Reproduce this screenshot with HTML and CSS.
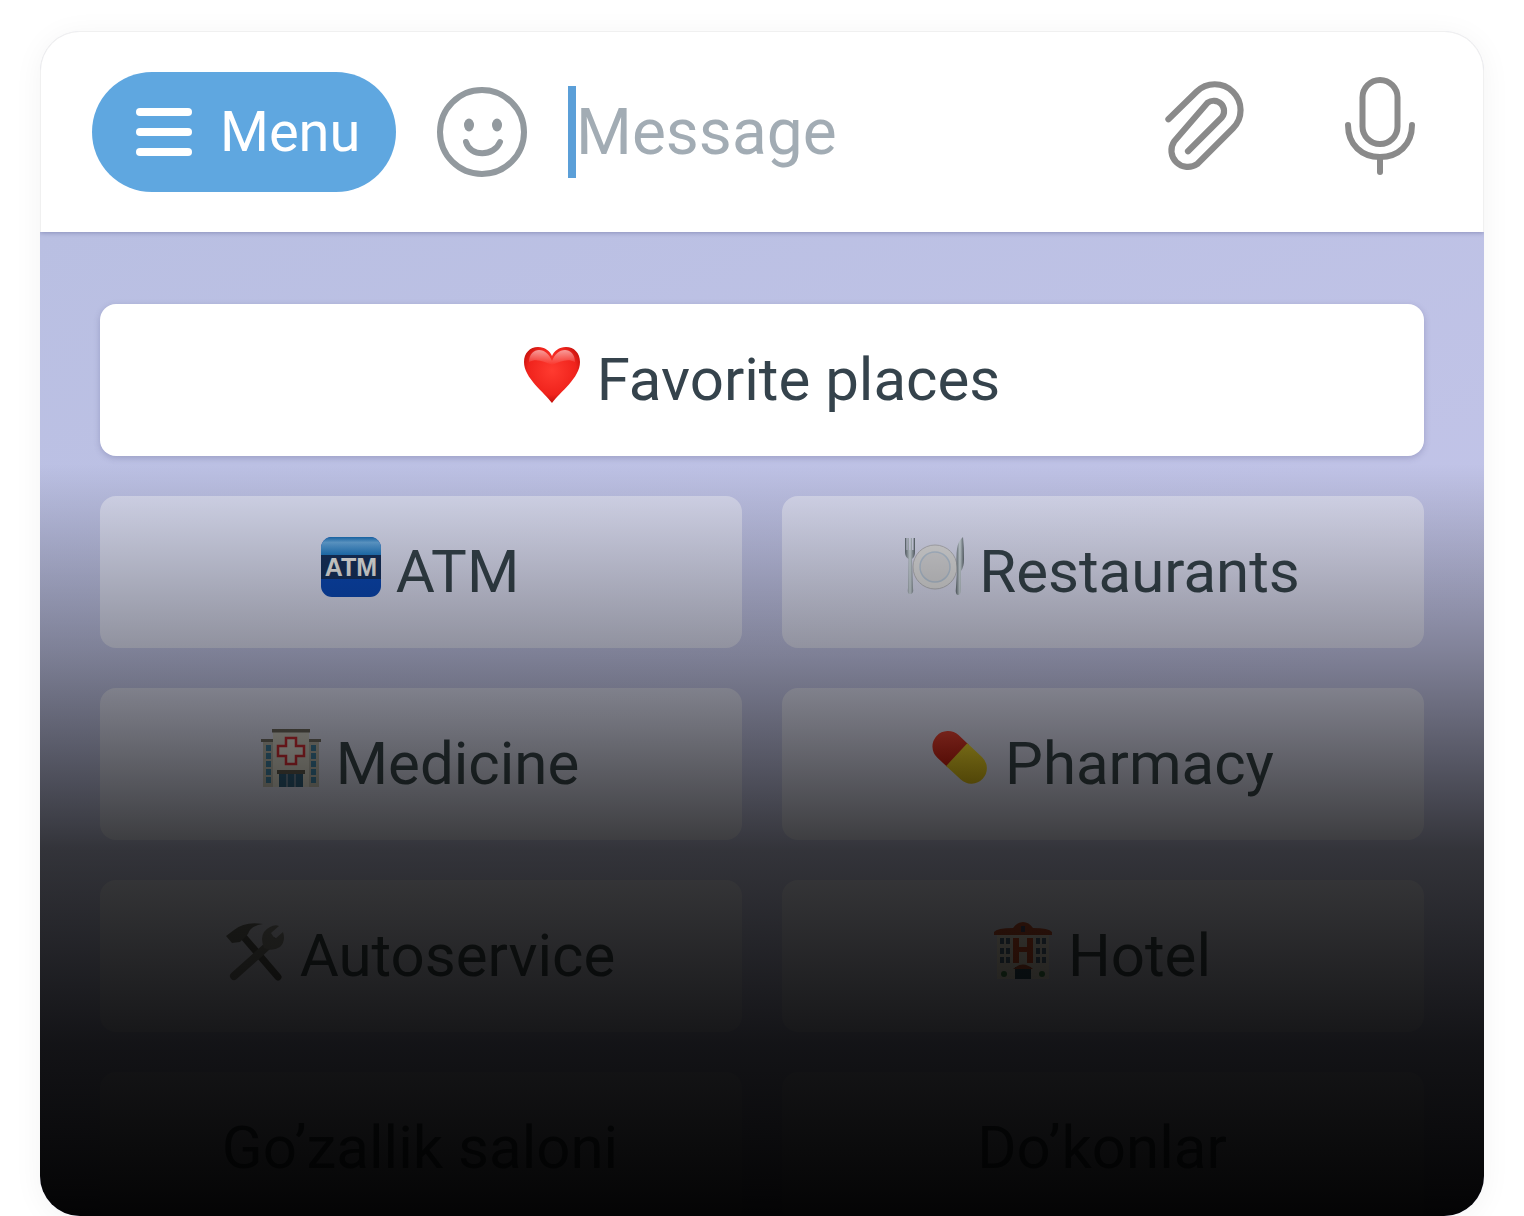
FILE: index.html
```html
<!DOCTYPE html>
<html lang="en">
<head>
<meta charset="utf-8">
<title>Keyboard</title>
<link rel="stylesheet" href="styles.css">
</head>
<body>
<main class="card">
  <header class="bar">
    <button class="menu">
      <span class="burger"><i></i><i></i><i></i></span>
      <span>Menu</span>
    </button>
    <svg class="smile" viewBox="0 0 90 90" fill="none" stroke="#92999e" stroke-width="6" stroke-linecap="round">
      <circle cx="45" cy="45" r="42"/>
      <ellipse cx="32" cy="38" rx="5" ry="6.5" fill="#92999e" stroke="none"/>
      <ellipse cx="60" cy="38" rx="5" ry="6.5" fill="#92999e" stroke="none"/>
      <path d="M29 55 C33 70 57 70 63 55"/>
    </svg>
    <div class="input"><span class="caret"></span><span class="placeholder">Message</span></div>
    <svg class="clip" viewBox="0 0 90 100" fill="none" stroke="#8a8a8a" stroke-width="6" stroke-linecap="round" stroke-linejoin="round">
      <path d="M9 44 L36.3 17.3 A25 25 0 0 1 71.7 52.7 L37 87.4 A16 16 0 0 1 14.7 65.2 L47 28 A10 10 0 0 1 61 42 L28 75"/>
    </svg>
    <svg class="mic" viewBox="0 0 76 104" fill="none" stroke="#8a8a8a" stroke-width="6" stroke-linecap="round">
      <rect x="20.5" y="3" width="35" height="64" rx="17.5"/>
      <path d="M6 48 C6 68 20 80 38 80 C56 80 70 68 70 48"/>
      <path d="M38 80 V95"/>
    </svg>
  </header>
  <section class="keys">
    <button class="key key-wide">
      <svg class="emoji" viewBox="0 0 60 60">
        <defs>
          <radialGradient id="hg" cx="50%" cy="42%" r="60%"><stop offset="0" stop-color="#ff3b30"/><stop offset=".72" stop-color="#f0231c"/><stop offset="1" stop-color="#b80d08"/></radialGradient>
          <linearGradient id="hh" x1="0" y1="0" x2="0" y2="1"><stop offset="0" stop-color="#fff" stop-opacity=".55"/><stop offset="1" stop-color="#fff" stop-opacity="0"/></linearGradient>
        </defs>
        <path fill="url(#hg)" d="M30 58 C22 47 2 33 2 17 C2 8 8 2 16 2 C23 2 28 6 30 11 C32 6 37 2 44 2 C52 2 58 8 58 17 C58 33 38 47 30 58Z"/>
        <path fill="url(#hh)" d="M7 17 C7 9 12 5 17 5 C23 5 27 9 30 16 C33 9 37 5 43 5 C48 5 53 9 53 17 C45 13 38 17 30 20 C22 17 15 13 7 17Z"/>
      </svg>
      <span>Favorite places</span>
    </button>
    <button class="key">
      <svg class="emoji" viewBox="0 0 60 60">
        <defs>
          <linearGradient id="at" x1="0" y1="0" x2="0" y2="1"><stop offset="0" stop-color="#1a70b8"/><stop offset=".3" stop-color="#66a8de"/><stop offset="1" stop-color="#2079c2"/></linearGradient>
        </defs>
        <rect width="60" height="60" rx="11" fill="#0a47b4"/>
        <path d="M0 18 V11 A11 11 0 0 1 11 0 H49 A11 11 0 0 1 60 11 V18Z" fill="url(#at)"/>
        <rect y="18" width="60" height="24" fill="#15305c"/>
        <text class="atm" x="30" y="39" text-anchor="middle">ATM</text>
      </svg>
      <span>ATM</span>
    </button>
    <button class="key">
      <svg class="emoji" viewBox="0 0 60 60">
        <defs>
          <linearGradient id="st" x1="0" y1="0" x2="1" y2="0"><stop offset="0" stop-color="#5f6a72"/><stop offset=".5" stop-color="#d2dde4"/><stop offset="1" stop-color="#5c666e"/></linearGradient>
        </defs>
        <path d="M1 1 V15 Q1 20 4.500 22 L4 51 Q3 57 6 57 Q10 57 9 51 L8 22 Q11 20 11 15 V1 H9.500 V13 H8 V1 H6.500 V13 H5 V1 H3.500 V13 H2.500 V1Z" fill="url(#st)"/>
        <circle cx="31" cy="30" r="22" fill="#dcdcde" stroke="#b4b4ba"/>
        <circle cx="31" cy="30" r="15" fill="#d4d4d8" stroke="#b5c4d6" stroke-width="1.500"/>
        <path d="M54 58 Q51 58 52 50 L53 34 Q52 20 53 12 Q54 4 59 0 Q60 10 60 22 Q60 30 57 34 L57 52 Q57 58 54 58Z" fill="url(#st)"/>
      </svg>
      <span>Restaurants</span>
    </button>
    <button class="key">
      <svg class="emoji" viewBox="0 0 60 60">
        <rect x="2" y="12" width="12" height="46" fill="#b8b6ae"/>
        <rect x="46" y="12" width="12" height="46" fill="#b8b6ae"/>
        <rect x="0" y="10" width="15" height="3" fill="#6f6c66"/>
        <rect x="45" y="10" width="15" height="3" fill="#6f6c66"/>
        <rect x="12" y="3" width="36" height="55" fill="#d4d2ca"/>
        <rect x="11" y="0" width="38" height="3.500" fill="#6a665f"/>
        <path d="M25 9 H35 V17 H43 V27 H35 V35 H25 V27 H17 V17 H25Z" fill="#e6e4de" stroke="#d22a36" stroke-width="2.500"/>
        <rect x="16" y="41" width="28" height="4" fill="#5c5850"/>
        <rect x="18" y="45" width="24" height="13" fill="#2a5a7c"/>
        <path d="M26 45 V58 M34 45 V58" stroke="#aab" stroke-width="1"/>
        <g fill="#3c7ea4"><rect x="5" y="16" width="5" height="6"/><rect x="5" y="24" width="5" height="6"/><rect x="5" y="32" width="5" height="6"/><rect x="5" y="40" width="5" height="6"/><rect x="5" y="48" width="5" height="6"/><rect x="50" y="16" width="5" height="6"/><rect x="50" y="24" width="5" height="6"/><rect x="50" y="32" width="5" height="6"/><rect x="50" y="40" width="5" height="6"/><rect x="50" y="48" width="5" height="6"/></g>
      </svg>
      <span>Medicine</span>
    </button>
    <button class="key">
      <svg class="emoji" viewBox="0 0 60 60">
        <defs>
          <linearGradient id="pr" x1="0" y1="0" x2="1" y2="1"><stop offset="0" stop-color="#f04a3c"/><stop offset="1" stop-color="#c4180f"/></linearGradient>
          <linearGradient id="py" x1="0" y1="0" x2="1" y2="1"><stop offset="0" stop-color="#f5dc30"/><stop offset="1" stop-color="#c7a810"/></linearGradient>
        </defs>
        <g transform="rotate(43 30 28)">
          <path d="M28 13 H14 A15.500 15.500 0 0 0 14 44 H28Z" fill="url(#pr)"/>
          <path d="M26 13 H46 A15.500 15.500 0 0 1 46 44 H26Z" fill="url(#py)"/>
        </g>
      </svg>
      <span>Pharmacy</span>
    </button>
    <button class="key">
      <svg class="emoji" viewBox="0 0 60 60">
        <g stroke-linecap="round" fill="none">
          <path d="M17 14 L53 56" stroke="#555" stroke-width="7"/>
          <path d="M48 20 L9 55" stroke="#777" stroke-width="8"/>
        </g>
        <path d="M1 15 L9 9 Q20 0 38 3 Q25 5 23 13 L15 21 L7 22Z" fill="#6a6a6a"/>
        <path d="M39 27 Q33 12 45 6 Q50 3 54 5 L46 12 L50 18 L58 11 Q61 20 55 26 Q47 31 39 27Z" fill="#8a8a8a"/>
      </svg>
      <span>Autoservice</span>
    </button>
    <button class="key">
      <svg class="emoji" viewBox="0 0 60 60">
        <rect x="4" y="12" width="52" height="46" fill="#f4ecdf"/>
        <path d="M1 11 Q4 7 20 7 Q24 1 30 1 Q36 1 40 7 Q56 7 59 11 V14 H1Z" fill="#c0492c"/>
        <path d="M20 17 H26 V26 H34 V17 H40 V42 H34 V31 H26 V42 H20Z" fill="#d84a28"/>
        <rect x="22" y="46" width="16" height="12" fill="#284b63"/>
        <path d="M20 48 Q30 39 40 48Z" fill="#c0492c"/>
        <rect x="28" y="5" width="4" height="6" fill="#446"/>
        <g fill="#4c6a8a"><rect x="7" y="17" width="4" height="6"/><rect x="13" y="17" width="4" height="6"/><rect x="7" y="27" width="4" height="6"/><rect x="13" y="27" width="4" height="6"/><rect x="7" y="36" width="4" height="6"/><rect x="13" y="36" width="4" height="6"/><rect x="43" y="17" width="4" height="6"/><rect x="49" y="17" width="4" height="6"/><rect x="43" y="27" width="4" height="6"/><rect x="49" y="27" width="4" height="6"/><rect x="43" y="36" width="4" height="6"/><rect x="49" y="36" width="4" height="6"/></g>
        <g fill="#3c8a4c"><circle cx="11" cy="53" r="3"/><circle cx="49" cy="53" r="3"/></g>
      </svg>
      <span>Hotel</span>
    </button>
    <button class="key"><span>Go’zallik saloni</span></button>
    <button class="key"><span>Do’konlar</span></button>
  </section>
  <div class="fade"></div>
</main>
</body>
</html>
```

FILE: styles.css
```css
* { box-sizing: border-box; }
html, body { margin: 0; height: 100%; }
body {
  background: #fff;
  padding: 31px 40px 0;
  overflow: hidden;
  font-family: Roboto, "Noto Sans", sans-serif;
}
.card {
  position: relative;
  height: 1185px;
  border-radius: 40px;
  overflow: hidden;
  background: #fff;
  display: flex;
  flex-direction: column;
  box-shadow: 0 4px 30px rgba(0, 0, 0, .05);
}
.bar {
  position: relative;
  z-index: 1;
  flex: none;
  height: 201px;
  display: flex;
  align-items: center;
  padding: 0 0 0 52px;
  background: #fff;
  border: 1px solid #f0f0f0;
  border-bottom: 0;
  border-radius: 40px 40px 0 0;
  box-shadow: 0 1px 4px rgba(70, 75, 130, .4);
}
.menu {
  flex: none;
  width: 304px;
  height: 120px;
  margin-left: -1px;
  padding: 0 0 0 44px;
  display: flex;
  align-items: center;
  gap: 28px;
  border: 0;
  border-radius: 60px;
  background: #5fa7e0;
  color: #fff;
  font: 400 56px Roboto, sans-serif;
}
.burger { display: flex; flex-direction: column; gap: 12px; width: 56px; }
.burger i { display: block; height: 8px; border-radius: 4px; background: #fff; }
.smile { flex: none; width: 90px; height: 90px; margin-left: 41px; }
.input { flex: 1; display: flex; align-items: center; margin-left: 41px; }
.caret { width: 8px; height: 92px; background: #5b9fd8; }
.placeholder { font-size: 64px; color: #a2acb4; }
.clip { flex: none; width: 93px; height: 103px; margin-right: 90px; margin-top: -13px; }
.mic { flex: none; width: 76px; height: 104px; margin-right: 65px; margin-top: -7px; }
.keys {
  flex: 1;
  display: grid;
  grid-template-columns: 1fr 1fr;
  grid-auto-rows: 152px;
  gap: 40px;
  padding: 72px 60px 0;
  background: linear-gradient(160deg, #b9bfe2, #c2c4e8 60%);
}
.key {
  height: 152px;
  display: flex;
  align-items: center;
  justify-content: center;
  gap: 15px;
  padding: 0 2px 2px 0;
  border: 0;
  border-radius: 16px;
  background: rgba(255, 255, 255, .4);
  color: #35434c;
  font: 400 60px Roboto, sans-serif;
}
.key-wide {
  grid-column: 1 / -1;
  background: #fff;
  box-shadow: 0 2px 6px rgba(60, 60, 110, .25);
}
.emoji { flex: none; width: 60px; height: 60px; margin-bottom: 8px; }
.atm { font: 700 25px "Liberation Sans", sans-serif; fill: #e8e8e8; }
.fade {
  position: absolute;
  left: 0;
  right: 0;
  top: 433px;
  bottom: 0;
  pointer-events: none;
  background: linear-gradient(180deg,
    rgba(4, 4, 0, 0) 0,
    rgba(4, 4, 0, .35) 190px,
    rgba(4, 4, 0, .75) 385px,
    rgba(2, 2, 2, .91) 580px,
    rgba(0, 0, 0, .98) 752px);
}
```
